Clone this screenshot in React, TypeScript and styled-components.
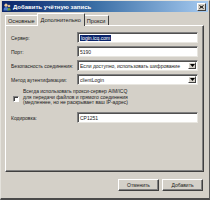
import React from "react";
import styled, { createGlobalStyle } from "styled-components";

const GlobalStyle = createGlobalStyle`
  html, body {
    margin: 0;
    padding: 0;
    background: #d4d0c8;
  }
  body {
    font-family: "Liberation Sans", Arial, sans-serif;
  }
`;

const Window = styled.div`
  width: 210px;
  height: 200px;
  box-sizing: border-box;
  background: #d4d0c8;
  border-top: 1px solid #e4e2dc;
  border-left: 1px solid #e4e2dc;
  border-right: 1px solid #5a5a5a;
  border-bottom: 2px solid #4a4a4a;
  display: flex;
  flex-direction: column;
  font-size: 5px;
  color: #1a1a1a;
`;

const TitleBar = styled.div`
  height: 11px;
  margin: 0 1px;
  background: linear-gradient(to right, #0a246a 0%, #3a6ea5 45%, #a6caf0 100%);
  display: flex;
  align-items: center;
  padding: 0 2px 0 1px;
  gap: 2px;
`;

const Title = styled.span`
  flex: 1;
  color: #fff;
  font-weight: bold;
  font-size: 6px;
  white-space: nowrap;
`;

const CloseButton = styled.div`
  width: 9px;
  height: 8px;
  box-sizing: border-box;
  background: #d4d0c8;
  border: 1px solid;
  border-color: #fff #404040 #404040 #fff;
  display: flex;
  align-items: center;
  justify-content: center;
`;

const TabRow = styled.div`
  display: flex;
  align-items: flex-end;
  height: 12px;
  margin: 1px 0 0 4px;
  position: relative;
  z-index: 1;
`;

const Tab = styled.div<{ $active?: boolean }>`
  box-sizing: border-box;
  height: ${(p) => (p.$active ? "13px" : "10px")};
  margin-bottom: ${(p) => (p.$active ? "-1px" : "0")};
  padding: 0 ${(p) => (p.$active ? "3px" : "2px")};
  margin-left: ${(p) => (p.$active ? "-1px" : "0")};
  margin-right: ${(p) => (p.$active ? "-1px" : "0")};
  background: #d4d0c8;
  border-top: 1px solid #fff;
  border-left: 1px solid #fff;
  border-right: 1px solid #404040;
  border-top-left-radius: 1px;
  border-top-right-radius: 1px;
  display: flex;
  align-items: center;
  white-space: nowrap;
  font-size: 5.6px;
  position: relative;
  z-index: ${(p) => (p.$active ? 2 : 1)};
`;

const Panel = styled.div`
  height: 147px;
  margin: 0 5px 0 4px;
  box-sizing: border-box;
  border-top: 1px solid #fff;
  border-left: 1px solid #fff;
  border-right: 1px solid #404040;
  border-bottom: 1px solid #404040;
  box-shadow: inset -1px -1px 0 #808080;
  padding: 6px 5px 0 5px;
  display: flex;
  flex-direction: column;
  gap: 3px;
`;

const Row = styled.div`
  display: grid;
  grid-template-columns: 66px 1fr;
  align-items: center;
  height: 11px;
`;

const Label = styled.span`
  white-space: nowrap;
`;

const Field = styled.div`
  height: 11px;
  box-sizing: border-box;
  background: #fff;
  border-top: 1px solid #808080;
  border-left: 1px solid #808080;
  border-right: 1px solid #e8e6e0;
  border-bottom: 1px solid #e8e6e0;
  box-shadow: inset 1px 1px 0 #505050;
  display: flex;
  align-items: center;
  padding: 0 1px 0 2px;
  white-space: nowrap;
  overflow: hidden;
`;

const Selected = styled.span`
  background: #0a246a;
  color: #fff;
  padding: 0 1px;
`;

const Value = styled.span`
  flex: 1;
  overflow: hidden;
`;

const ArrowButton = styled.div`
  width: 8px;
  height: 7px;
  flex: none;
  box-sizing: border-box;
  background: #d4d0c8;
  border: 1px solid;
  border-color: #fff #404040 #404040 #fff;
  display: flex;
  align-items: center;
  justify-content: center;
`;

const CheckRow = styled.div`
  display: flex;
  align-items: center;
  gap: 4px;
  height: 21px;
  padding-left: 2px;
`;

const CheckBox = styled.div`
  width: 6px;
  height: 6px;
  flex: none;
  box-sizing: border-box;
  background: #fff;
  border-top: 1px solid #808080;
  border-left: 1px solid #808080;
  border-right: 1px solid #fff;
  border-bottom: 1px solid #fff;
  box-shadow: inset 1px 1px 0 #404040;
  margin-top: 1px;
`;

const CheckText = styled.div`
  line-height: 5.6px;
  margin-top: -2px;
`;

const Footer = styled.div`
  display: flex;
  justify-content: flex-end;
  gap: 3px;
  padding: 7px 6px 0 0;
`;

const Button = styled.div`
  width: 41px;
  height: 12px;
  box-sizing: border-box;
  background: #d4d0c8;
  border-top: 1px solid #fff;
  border-left: 1px solid #fff;
  border-right: 1px solid #404040;
  border-bottom: 1px solid #404040;
  box-shadow: inset -1px -1px 0 #808080;
  display: flex;
  align-items: center;
  justify-content: center;
`;

const Arrow = () => (
  <svg width="5" height="3" viewBox="0 0 5 3">
    <path d="M0 0h5L2.5 3z" fill="#000" />
  </svg>
);

const AppIcon = () => (
  <svg width="8" height="8" viewBox="0 0 8 8">
    <circle cx="3" cy="2.2" r="1.6" fill="#e8c9a0" />
    <path d="M0.5 7.5c0-2.4 1.1-3.4 2.5-3.4s2.5 1 2.5 3.4z" fill="#4f7fd0" />
    <circle cx="6" cy="3" r="1.3" fill="#d9b98f" />
    <path d="M4.3 7.5c0-2 0.8-2.8 1.7-2.8s1.7 0.8 1.7 2.8z" fill="#6a9a3c" />
  </svg>
);

export default function App() {
  return (
    <>
      <GlobalStyle />
      <Window>
        <TitleBar>
          <AppIcon />
          <Title>Добавить учётную запись</Title>
          <CloseButton>
            <svg width="5" height="4" viewBox="0 0 5 4">
              <path d="M0.5 0.5l4 3M4.5 0.5l-4 3" stroke="#000" strokeWidth="1" />
            </svg>
          </CloseButton>
        </TitleBar>
        <TabRow>
          <Tab>Основные</Tab>
          <Tab $active>Дополнительно</Tab>
          <Tab>Прокси</Tab>
        </TabRow>
        <Panel>
          <Row>
            <Label>Сервер:</Label>
            <Field>
              <Selected>login.icq.com</Selected>
            </Field>
          </Row>
          <Row>
            <Label>Порт:</Label>
            <Field>5190</Field>
          </Row>
          <Row>
            <Label>Безопасность соединения:</Label>
            <Field>
              <Value>Если доступно, использовать шифрование</Value>
              <ArrowButton>
                <Arrow />
              </ArrowButton>
            </Field>
          </Row>
          <Row>
            <Label>Метод аутентификации:</Label>
            <Field>
              <Value>clientLogin</Value>
              <ArrowButton>
                <Arrow />
              </ArrowButton>
            </Field>
          </Row>
          <CheckRow>
            <CheckBox />
            <CheckText>
              Всегда использовать прокси-сервер AIM/ICQ
              <br />
              для передачи файлов и прямого соединения
              <br />
              (медленнее, но не раскрывает ваш IP-адрес)
            </CheckText>
          </CheckRow>
          <Row>
            <Label>Кодировка:</Label>
            <Field>CP1251</Field>
          </Row>
        </Panel>
        <Footer>
          <Button>Отменить</Button>
          <Button>Добавить</Button>
        </Footer>
      </Window>
    </>
  );
}
